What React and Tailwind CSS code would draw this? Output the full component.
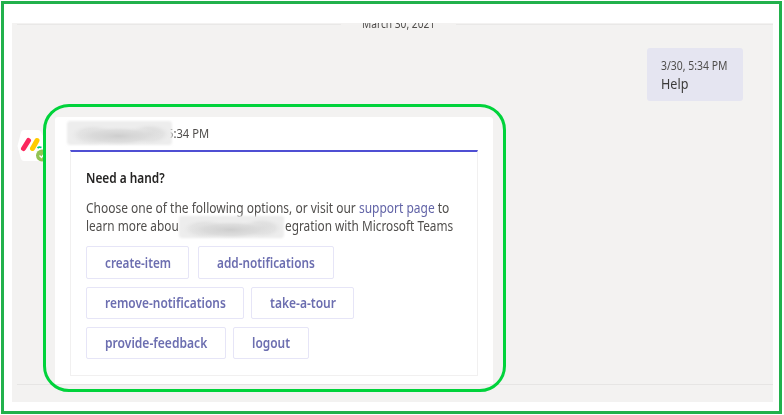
import { useLayoutEffect, useRef, useState } from "react";

// Condenses a single line of text so that it fills its column's width.
function Line({ className = "", children }) {
  const box = useRef(null);
  const text = useRef(null);
  const [scale, setScale] = useState(1);
  useLayoutEffect(() => {
    setScale(box.current.clientWidth / text.current.offsetWidth);
  }, []);
  return (
    <div ref={box} className={`whitespace-nowrap ${className}`}>
      <span ref={text} className="inline-block origin-left" style={{ transform: `scaleX(${scale})` }}>
        {children}
      </span>
    </div>
  );
}

function Action({ className, width, children }) {
  return (
    <button className={`flex shrink-0 items-center rounded-[2px] border border-[#e6e5f7] bg-white pl-[18px] font-semibold text-[#6c6eb0] ${className}`}>
      <Line className={`shrink-0 text-[13.5px] leading-[18px] ${width}`}>{children}</Line>
    </button>
  );
}

function Smudge({ id, className }) {
  return (
    <svg className={`absolute ${className}`} viewBox="0 0 108 28" preserveAspectRatio="none">
      <defs>
        <radialGradient id={id}>
          <stop offset="0" stopColor="#cdcdcd" />
          <stop offset="0.6" stopColor="#dadada" stopOpacity="0.8" />
          <stop offset="1" stopColor="#ececec" stopOpacity="0" />
        </radialGradient>
        <filter id={`${id}-edge`}>
          <feGaussianBlur stdDeviation="1.2" />
        </filter>
      </defs>
      <rect x="2" y="2" width="104" height="24" rx="3" fill="#ededed" filter={`url(#${id}-edge)`} />
      <ellipse cx="28" cy="16" rx="24" ry="11" fill={`url(#${id})`} opacity="0.7" />
      <ellipse cx="84" cy="15" rx="22" ry="11" fill={`url(#${id})`} opacity="0.7" />
      <ellipse cx="53" cy="17" rx="44" ry="10" fill={`url(#${id})`} />
    </svg>
  );
}

function Avatar() {
  return (
    <svg className="h-8 w-7 shrink-0" viewBox="0 0 28 32">
      <path d="M7 0H21Q23 0 24 2L28 10V31H7Q5 31 4 29L1 18Q0 16 1 14L4 2Q5 0 7 0Z" fill="#fff" />
      <path d="M6.5 18.5 11.5 10.5" stroke="#fb275d" strokeWidth="5" strokeLinecap="round" />
      <path d="M15.5 18.5 20 10.5" stroke="#ffcb00" strokeWidth="5" strokeLinecap="round" />
      <path d="M20.5 18Q22 16.5 24.5 17.5" stroke="#00c875" strokeWidth="1.8" fill="none" />
      <circle cx="25" cy="25.5" r="6" fill="#92c353" />
      <path d="m22.5 25.5 2 2 3-4" stroke="#fff" strokeWidth="1.3" fill="none" />
    </svg>
  );
}

export default function App() {
  return (
    <div className="h-[415px] w-[784px] bg-white pt-px pr-[2px] pb-px pl-px font-['Noto_Sans','Open_Sans',sans-serif] text-[#504e4c]">
      <div className="h-full border-[3px] border-[#22b14c] pt-[19px] pl-2">
        <main className="relative h-[379px] w-[761px] overflow-hidden bg-[#f3f2f1]">
          <div className="flex h-[25px] items-start pl-[5px]">
            <div className="mt-px h-px w-[324px] bg-[#e9e8e7]" />
            <Line className="-mt-2 ml-[21px] w-[73px] text-[12px] leading-[18px]">March 30, 2021</Line>
            <div className="mt-px ml-[21px] h-px flex-1 bg-[#e9e8e7]" />
          </div>
          <section className="ml-auto mr-[30px] h-[53px] w-24 rounded-[3px] bg-[#e5e5f1] pt-[9px] pl-[14px]">
            <Line className="w-[66px] text-[12px] leading-[18px]">3/30, 5:34 PM</Line>
            <Line className="w-[27px] text-[13.5px] leading-[18px] text-[#3b3a39]">Help</Line>
          </section>
          <div className="ml-[5px] flex h-[284px] items-start border-b border-[#e6e5e4] pt-[3px]">
            <div className="mt-[26px] w-[26px]"><Avatar /></div>
            <div className="h-[288px] w-[463px] shrink-0 rounded-[26px] border-[3px] border-[#00d33b] pt-[10px] pl-[9px]">
              <article className="relative h-[267px] w-[438px] rounded-t-[3px] bg-white pt-2 pl-[15px]">
                <header className="pl-[97px]">
                  <Line className="w-[42px] text-[12px] leading-[18px]">5:34 PM</Line>
                </header>
                <Smudge id="sender" className="top-[2px] left-[10px] h-7 w-[109px]" />
                <div className="mt-[7px] h-[226px] w-[408px] border border-t-2 border-[#f1f0f0] border-t-[#4f4fd3] pt-[17px] pl-[15px]">
                  <Line className="w-[79px] text-[13.5px] leading-[18px] font-semibold text-[#252423]">Need a hand?</Line>
                  <div className="relative mt-3 text-[13.5px] leading-[18px]">
                    <Line className="w-[363px]">
                      Choose one of the following options, or visit our <a className="text-[#6264a7]">support page</a> to
                    </Line>
                    <div className="flex">
                      <Line className="w-[93px]">learn more abou</Line>
                      <Line className="ml-[106px] w-[168px]">egration with Microsoft Teams</Line>
                    </div>
                    <Smudge id="product" className="top-[15px] left-[91px] h-[26px] w-[109px]" />
                  </div>
                  <div className="mt-[11px] flex flex-col gap-2">
                    <div className="flex gap-[9px]">
                      <Action className="h-[33px] w-[103px]" width="w-[66px]">create-item</Action>
                      <Action className="h-[33px] w-[136px]" width="w-[98px]">add-notifications</Action>
                    </div>
                    <div className="flex gap-[7px]">
                      <Action className="h-8 w-[158px]" width="w-[121px]">remove-notifications</Action>
                      <Action className="h-8 w-[103px]" width="w-[66px]">take-a-tour</Action>
                    </div>
                    <div className="flex gap-[7px]">
                      <Action className="h-8 w-[140px]" width="w-[102px]">provide-feedback</Action>
                      <Action className="h-8 w-[76px]" width="w-[38px]">logout</Action>
                    </div>
                  </div>
                </div>
              </article>
            </div>
          </div>
        </main>
      </div>
    </div>
  );
}
